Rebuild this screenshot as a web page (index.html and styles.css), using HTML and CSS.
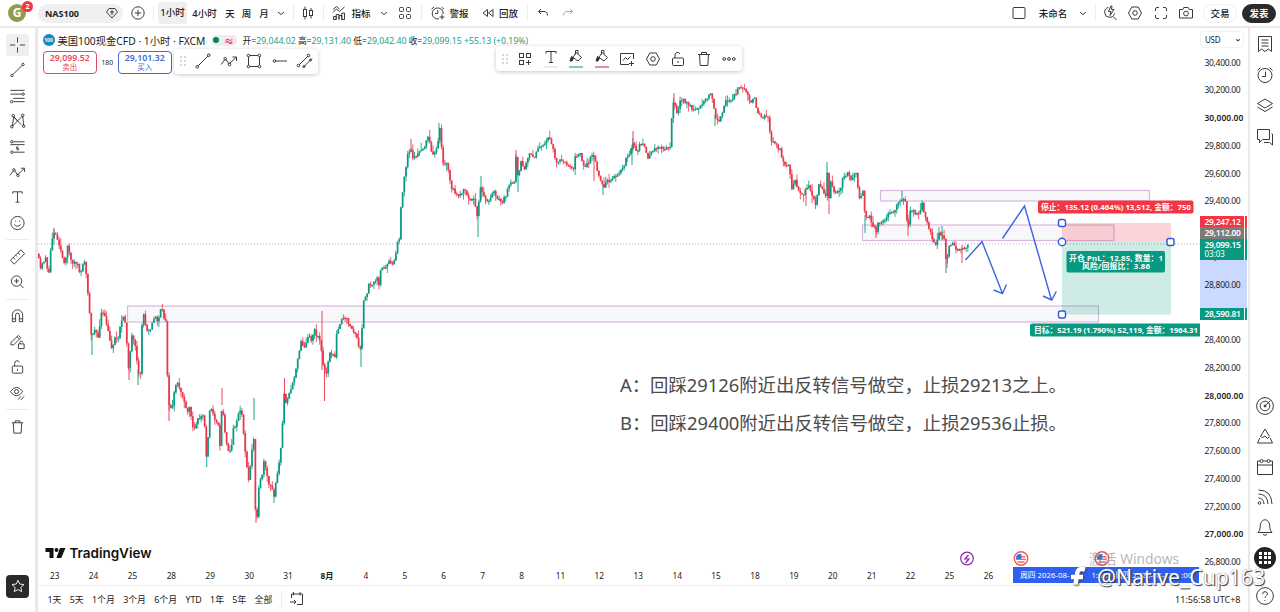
FILE: index.html
```html
<!DOCTYPE html>
<html lang="zh-CN">
<head>
    <meta charset="UTF-8">
    <meta name="viewport" content="width=device-width, initial-scale=1.0">
    <title>NAS100</title>
    <link rel="stylesheet" href="styles.css">
</head>
<body>
    <svg class="defs">
        <symbol id="chevron" viewBox="0 0 18 18"><path d="M6 8l3 2.6L12 8"/></symbol>
        <symbol id="plus-circle" viewBox="0 0 18 18"><circle cx="9" cy="9" r="6.2"/><path d="M9 5.8v6.4M5.8 9h6.4"/></symbol>
        <symbol id="candles" viewBox="0 0 18 18"><path d="M6 2.5v3M6 12.5v3M12 4v2.5M12 11.5v3"/><rect x="4.5" y="5.5" width="3" height="7"/><rect x="10.5" y="6.5" width="3" height="5"/></symbol>
        <symbol id="indicators" viewBox="0 0 18 18"><path d="M3.500 15.500v-3h2.700v3zM6.200 15.500v-5H9v5M9 15.500v-4h2.800v4M11.800 15.500v-6.500h2.700v6.500zM3 8.500l3.500-3.500 3 2.500L14.500 3M3 5.500L6.500 2.500 9.500 5"/></symbol>
        <symbol id="grid" viewBox="0 0 18 18"><rect x="3.500" y="3.500" width="4" height="4" rx="1"/><rect x="10.500" y="3.500" width="4" height="4" rx="1"/><rect x="3.500" y="10.500" width="4" height="4" rx="1"/><rect x="10.500" y="10.500" width="4" height="4" rx="1"/></symbol>
        <symbol id="grid-plus" viewBox="0 0 18 18"><rect x="3.500" y="3.500" width="4" height="4"/><rect x="10.500" y="3.500" width="4" height="4"/><rect x="3.500" y="10.500" width="4" height="4"/><path d="M12.500 10v5M10 12.500h5"/></symbol>
        <symbol id="alarm-plus" viewBox="0 0 18 18"><path d="M10 14.800A5.500 5.500 0 1 1 14.200 10M8.800 6v3.500H6M2.500 5.200L5 3M15 5.200L12.500 3M13 10.500v5M10.500 13h5"/></symbol>
        <symbol id="rewind" viewBox="0 0 18 18"><path d="M8.500 5.500v7L4 9zM14 5.500v7L9.500 9z"/></symbol>
        <symbol id="undo" viewBox="0 0 18 18"><path d="M7 5L4.500 7.500 7 10M4.500 7.500H10c2.500 0 3.500 1.500 3.500 4"/></symbol>
        <symbol id="redo" viewBox="0 0 18 18"><path d="M11 5l2.500 2.500L11 10M13.500 7.500H8c-2.500 0-3.500 1.500-3.500 4"/></symbol>
        <symbol id="square" viewBox="0 0 18 18"><rect x="3" y="3.500" width="12" height="11" rx="1"/></symbol>
        <symbol id="quick-search" viewBox="0 0 18 18"><path d="M7.500 3.400a5 5 0 1 0 6 6M12 12.500l3.500 3.500M10 2L7.500 7.500h2.500L9 11.500l4-6h-2.500L11 2z"/></symbol>
        <symbol id="hexagon" viewBox="0 0 18 18"><path d="M5.800 3h6.400L15.500 9l-3.300 6H5.800L2.500 9z"/><circle cx="9" cy="9" r="2.300"/></symbol>
        <symbol id="fullscreen" viewBox="0 0 18 18"><path d="M3.500 7V5q0-1.500 1.500-1.500h2M11 3.500h2q1.500 0 1.500 1.500v2M14.500 11v2q0 1.500-1.500 1.500h-2M7 14.500H5q-1.500 0-1.500-1.500v-2"/></symbol>
        <symbol id="camera" viewBox="0 0 18 18"><path d="M2.500 5.500h3.300l1-2h4.400l1 2h3.300v8.500h-13z"/><circle cx="9" cy="9.500" r="2.400"/></symbol>
        <symbol id="cross" viewBox="0 0 18 18"><path d="M9 1v5.500M9 11.500V17M1 9h5.500M11.500 9H17"/></symbol>
        <symbol id="line" viewBox="0 0 18 18"><path d="M4.200 13.800l9.600-9.600"/><circle cx="3.200" cy="14.800" r="1.300"/><circle cx="14.800" cy="3.200" r="1.300"/></symbol>
        <symbol id="fib" viewBox="0 0 18 18"><path d="M1.500 3h15M1.500 7h12M4.500 11.500h12M4.500 15h12"/><circle cx="15" cy="7" r="1.300"/><circle cx="2.800" cy="15" r="1.300"/></symbol>
        <symbol id="pattern" viewBox="0 0 18 18"><path d="M3.500 14.500L5 4.500l8 8.500M14.500 3.500L15.500 14M3.500 14.500L14 4M5 4.500l4 4.500"/><circle cx="3" cy="15" r="1.400"/><circle cx="4.500" cy="3.500" r="1.400"/><circle cx="14.500" cy="3" r="1.400"/><circle cx="15.500" cy="14.500" r="1.400"/></symbol>
        <symbol id="position" viewBox="0 0 18 18"><path d="M4.500 3.500h12M1.500 6.500h15M4.500 14.500h12M10 9H8v1.500h2V12H8"/><circle cx="3" cy="3.500" r="1.300"/><circle cx="3" cy="14.500" r="1.300"/></symbol>
        <symbol id="path" viewBox="0 0 18 18"><path d="M1 12.500l3.500-4.500M6 7.500l3 4.500 7-6.500M12.500 5h4v4"/><circle cx="5.200" cy="6.800" r="1.300"/><circle cx="9.500" cy="12.500" r="1.300"/></symbol>
        <symbol id="text" viewBox="0 0 18 18"><path d="M4 5.500V3.500h10v2M9 3.500v11M7 14.500h4"/></symbol>
        <symbol id="smile" viewBox="0 0 18 18"><circle cx="9" cy="9" r="7"/><path d="M5.500 10.500q3.500 4 7 0M6.800 6.500v1M11.200 6.500v1"/></symbol>
        <symbol id="ruler" viewBox="0 0 18 18"><path d="M1.500 12.500l11-11 4 4-11 11zM4.500 9.500l2 2M7 7l1.500 1.500M9.500 4.500l2 2"/></symbol>
        <symbol id="zoom-in" viewBox="0 0 18 18"><circle cx="8" cy="8" r="5.500"/><path d="M12 12l3.500 3.500M8 5.500v5M5.500 8h5"/></symbol>
        <symbol id="magnet" viewBox="0 0 18 18"><path d="M3.500 15V8a5.500 5.500 0 0 1 11 0v7h-3.500V8a2 2 0 0 0-4 0v7zM3.500 12H7M11 12h3.500"/></symbol>
        <symbol id="pen-lock" viewBox="0 0 18 18"><path d="M2 12V9.500L10 2l2.500 2.500L5 12zM8.500 3.500L11 6M10 11h6v5h-6zM11.500 11V9.500a1.500 1.500 0 0 1 3 0"/></symbol>
        <symbol id="unlock" viewBox="0 0 18 18"><rect x="3.500" y="8" width="11" height="7.500" rx="1"/><path d="M6 8V5a2.600 2.600 0 0 1 5-1M9 11v2"/></symbol>
        <symbol id="eye" viewBox="0 0 18 18"><path d="M1.500 7.500q6.500-9 13 0-6.500 9-13 0z"/><circle cx="8" cy="7.500" r="2.200"/><path d="M9.500 16l3-3.500M12.500 16.500l3.500-4"/></symbol>
        <symbol id="trash" viewBox="0 0 18 18"><path d="M3 4.500h12M6.500 4.500v-2h5v2M4.500 4.500l.7 11h7.600l.7-11"/></symbol>
        <symbol id="star" viewBox="0 0 18 18"><path d="M9 2.500l2 4.300 4.700.6-3.500 3.200.9 4.700L9 13l-4.100 2.300.9-4.700-3.500-3.200 4.700-.6z"/></symbol>
        <symbol id="box" viewBox="0 0 18 18"><rect x="3.500" y="3.500" width="11" height="11"/><g fill="#fff"><circle cx="3.500" cy="3.500" r="1.300"/><circle cx="14.500" cy="3.500" r="1.300"/><circle cx="3.500" cy="14.500" r="1.300"/><circle cx="14.500" cy="14.500" r="1.300"/></g></symbol>
        <symbol id="ray" viewBox="0 0 18 18"><circle cx="3.500" cy="9" r="1.300"/><path d="M4.800 9H16"/></symbol>
        <symbol id="channel" viewBox="0 0 18 18"><path d="M3 13l9-9M7 15.500l9-9"/><circle cx="2.500" cy="13.500" r="1.300"/><circle cx="12.500" cy="3.500" r="1.300"/><circle cx="8" cy="14.500" r="1"/><circle cx="14.500" cy="8" r="1"/></symbol>
        <symbol id="dots" viewBox="0 0 18 18"><g fill="#c4c4c4" stroke="none"><circle cx="7" cy="5" r=".9"/><circle cx="11" cy="5" r=".9"/><circle cx="7" cy="9" r=".9"/><circle cx="11" cy="9" r=".9"/><circle cx="7" cy="13" r=".9"/><circle cx="11" cy="13" r=".9"/></g></symbol>
        <symbol id="bucket" viewBox="0 0 18 18"><path d="M9 4.500l5.500 5-3.500 3.500-5-3.500zM8.500 6.500V2.500h2.500V6"/><path d="M4.500 8.500l2 1.500-1.500 3H3z" fill="#222"/></symbol>
        <symbol id="chart-plus" viewBox="0 0 18 18"><path d="M15.500 9V3.500h-13v11H11M5 10.500l2.500-3 2 2 3-3M13.500 11v5M11 13.500h5"/></symbol>
        <symbol id="more" viewBox="0 0 18 18"><circle cx="4.200" cy="9" r="1.400"/><circle cx="9" cy="9" r="1.400"/><circle cx="13.800" cy="9" r="1.400"/></symbol>
        <symbol id="watchlist" viewBox="0 0 18 18"><path d="M2.500 1.500h13v15l-3-2.500-3.500 2.500L5.500 14l-3 2.500zM5.500 5h7M5.500 8h7M5.500 11h7"/></symbol>
        <symbol id="alarm" viewBox="0 0 18 18"><circle cx="9" cy="9.500" r="7"/><path d="M9.500 5.500v5H6M1.500 4.500L4.500 1.500M16.500 4.500l-3-3"/></symbol>
        <symbol id="layers" viewBox="0 0 18 18"><path d="M9 3l7.500 4.500L9 12 1.500 7.500zM1.500 11L9 15.500l7.500-4.500"/></symbol>
        <symbol id="chat" viewBox="0 0 18 18"><path d="M1.500 1.500h12v10h-7l-3 3v-3h-2zM15.500 6h1v11l-3-2.500H8"/></symbol>
        <symbol id="radar" viewBox="0 0 18 18"><circle cx="9" cy="9" r="8.400"/><circle cx="9" cy="9" r="4.800"/><circle cx="9" cy="9" r="1" fill="#333"/><path d="M9 9l5.500-5.500"/></symbol>
        <symbol id="ideas" viewBox="0 0 18 18"><path d="M4.500 9.500L9 2l4.500 7.500-2 2L9 9l-2.500 1.500zM3.800 11L1.500 16h15l-2.300-5"/></symbol>
        <symbol id="calendar" viewBox="0 0 18 18"><path d="M4 3H1.500v13.500h15V3H14M7 3h4M1.500 7h15"/><circle cx="5.500" cy="3" r="1.500"/><circle cx="12.500" cy="3" r="1.500"/></symbol>
        <symbol id="feed" viewBox="0 0 18 18"><circle cx="3.500" cy="15" r="1.300"/><path d="M2.500 10q5 0 5.500 6M2.500 6q9 0 9.500 10M2.500 2q13 0 13.500 14"/></symbol>
        <symbol id="bell" viewBox="0 0 18 18"><path d="M2 14.500h14q-2.200-2-2.200-5.500C13.800 4 11.500 1.800 9 1.800S4.200 4 4.200 9Q4.200 12.500 2 14.500zM7 16.500q2 1.500 4 0"/></symbol>
        <symbol id="help" viewBox="0 0 18 18"><circle cx="9" cy="9" r="8.400"/><path d="M6.500 7.200q0-2.500 2.500-2.500t2.500 2.200c0 1.800-2.500 1.800-2.500 4M9 13v1"/></symbol>
        <symbol id="goto" viewBox="0 0 18 18"><path d="M4.500 8V4h11v10.500H10M6.500 2v3.500M13 2v3.500M3 12h6M7 10l2 2-2 2"/></symbol>
        <symbol id="flag" viewBox="0 0 18 18"><circle cx="9" cy="9" r="7.600" fill="#fff" stroke="#f2515d" stroke-width="1.500"/><path d="M4 7h10M3.500 10h11M5 13h8" stroke="#f06a70" stroke-width="1.600"/><path d="M3.500 9.500V6.500L6 4h3.500v5.500z" fill="#3d73d8" stroke="none"/></symbol>
    </svg>

    <header class="topbar">
        <div class="top-left">
            <div class="avatar">G<span class="badge">2</span></div>
            <div class="search"><b>NAS100</b><svg class="icon"><path d="M6 4.500h6l2.500 3.500L9 14 3.500 8zM9 6v5M7 8h4"/></svg></div>
            <svg class="icon"><use href="#plus-circle"/></svg>
            <i class="sep"></i>
            <span class="tab active">1小时</span>
            <span>4小时</span>
            <span>天</span>
            <span>周</span>
            <span>月</span>
            <svg class="icon"><use href="#chevron"/></svg>
            <i class="sep"></i>
            <svg class="icon"><use href="#candles"/></svg>
            <i class="sep"></i>
            <svg class="icon"><use href="#indicators"/></svg>
            <span>指标</span>
            <svg class="icon"><use href="#chevron"/></svg>
            <svg class="icon"><use href="#grid"/></svg>
            <i class="sep"></i>
            <svg class="icon"><use href="#alarm-plus"/></svg>
            <span>警报</span>
            <svg class="icon push"><use href="#rewind"/></svg>
            <span>回放</span>
            <i class="sep"></i>
            <svg class="icon"><use href="#undo"/></svg>
            <svg class="icon faded"><use href="#redo"/></svg>
        </div>
        <div class="top-right">
            <svg class="icon"><use href="#square"/></svg>
            <span>未命名</span>
            <svg class="icon"><use href="#chevron"/></svg>
            <i class="sep"></i>
            <svg class="icon"><use href="#quick-search"/></svg>
            <svg class="icon"><use href="#hexagon"/></svg>
            <svg class="icon"><use href="#fullscreen"/></svg>
            <svg class="icon"><use href="#camera"/></svg>
            <span class="trade">交易</span>
            <span class="publish">发表</span>
        </div>
    </header>

    <nav class="tools">
        <div class="tool selected"><svg class="icon"><use href="#cross"/></svg></div>
        <div class="tool"><svg class="icon"><use href="#line"/></svg></div>
        <div class="tool"><svg class="icon"><use href="#fib"/></svg></div>
        <div class="tool"><svg class="icon"><use href="#pattern"/></svg></div>
        <div class="tool"><svg class="icon"><use href="#position"/></svg></div>
        <div class="tool"><svg class="icon"><use href="#path"/></svg></div>
        <div class="tool"><svg class="icon"><use href="#text"/></svg></div>
        <div class="tool"><svg class="icon"><use href="#smile"/></svg></div>
        <hr>
        <div class="tool"><svg class="icon"><use href="#ruler"/></svg></div>
        <div class="tool"><svg class="icon"><use href="#zoom-in"/></svg></div>
        <hr>
        <div class="tool"><svg class="icon"><use href="#magnet"/></svg></div>
        <div class="tool"><svg class="icon"><use href="#pen-lock"/></svg></div>
        <div class="tool"><svg class="icon"><use href="#unlock"/></svg></div>
        <div class="tool"><svg class="icon"><use href="#eye"/></svg></div>
        <hr>
        <div class="tool"><svg class="icon"><use href="#trash"/></svg></div>
        <div class="favorite"><svg class="icon"><use href="#star"/></svg></div>
    </nav>

    <main class="chart">
        <div class="plot">
            <!-- user units are window pixels -->
            <svg class="canvas" viewBox="38 28 1162 539">
                <g class="zone">
                    <rect x="127.500" y="306" width="971" height="16"/>
                    <rect x="862.500" y="225" width="251.500" height="15.500"/>
                    <rect x="880.500" y="190.500" width="269" height="10.500"/>
                </g>
                <path class="last-price" d="M38 244H1200"/>
                <g id="bars"></g>
                <rect x="1062" y="223" width="109" height="19" fill="#f23645" opacity=".21"/>
                <rect x="1062" y="242" width="109" height="72.500" fill="#089981" opacity=".2"/>
                <g class="arrow">
                    <path d="M965.500 260L982 241.500l20.500 52M993.500 290l9 3.700 4-9.200"/>
                    <path d="M1002.500 238.500L1024.500 206l27 94M1043 296l8.700 4 4.600-8.500"/>
                </g>
                <rect x="1038" y="200.500" width="155.500" height="13" rx="2" fill="#f23645"/>
                <text class="tag" x="1041" y="210" textLength="150">停止：135.12 (0.464%) 13,512, 金额：750</text>
                <rect x="1066.500" y="251" width="98.500" height="21.500" rx="2" fill="#089981"/>
                <text class="tag" x="1069" y="260.500" textLength="94">开仓 PnL：12.85, 数量：1</text>
                <text class="tag" x="1082" y="268.500" textLength="68">风险/回报比：3.86</text>
                <rect x="1030" y="323.500" width="172" height="13" rx="2" fill="#089981"/>
                <text class="tag" x="1034" y="333" textLength="164">目标：521.19 (1.790%) 52,119, 金额：1964.31</text>
                <g class="handle">
                    <rect x="1058.500" y="219.500" width="7" height="7" rx="2"/>
                    <circle cx="1062" cy="242" r="3.700"/>
                    <rect x="1167" y="238.500" width="7" height="7" rx="2"/>
                    <rect x="1058.500" y="311" width="7" height="7" rx="2"/>
                </g>
                <text class="note" x="620" y="392" textLength="447">A：回踩29126附近出反转信号做空，止损29213之上。</text>
                <text class="note" x="620" y="429.500" textLength="447">B：回踩29400附近出反转信号做空，止损29536止损。</text>
                <g fill="#111">
                    <path d="M45.500 548h8v10h-4v-6h-4zM60 548h5.500l-4.300 10h-4.800z"/>
                    <circle cx="56.500" cy="550" r="2"/>
                    <text class="brand" x="69.500" y="557.500" textLength="82">TradingView</text>
                </g>
                <g fill="none" stroke="#8e24aa" stroke-width="1.200">
                    <circle cx="967" cy="558.500" r="6.300"/>
                    <path d="M968.500 555l-3.500 4h4l-3.500 4"/>
                </g>
                <use href="#flag" x="1013" y="550.500" width="16" height="16"/>
                <use href="#flag" x="1094" y="550.500" width="16" height="16"/>
            </svg>

            <div class="legend">
                <span class="logo">100</span>
                <span class="title">美国100现金CFD · 1小时 · FXCM</span>
                <span class="status"><i></i><b>≈</b></span>
                <span class="ohlc">开=<em>29,044.02</em> 高=<em>29,131.40</em> 低=<em>29,042.40</em> 收=<em>29,099.15</em> <em>+55.13 (+0.19%)</em></span>
            </div>
            <div class="quotes">
                <div class="quote sell"><b>29,099.52</b>卖出</div>
                <span class="spread">180</span>
                <div class="quote buy"><b>29,101.32</b>买入</div>
            </div>

            <div class="float lines">
                <svg class="icon"><use href="#dots"/></svg>
                <svg class="icon"><use href="#line"/></svg>
                <svg class="icon"><use href="#path"/></svg>
                <svg class="icon"><use href="#box"/></svg>
                <svg class="icon"><use href="#ray"/></svg>
                <svg class="icon"><use href="#channel"/></svg>
            </div>
            <div class="float props">
                <svg class="icon"><use href="#dots"/></svg>
                <svg class="icon"><use href="#grid-plus"/></svg>
                <span class="swatch"><svg class="icon"><use href="#text"/></svg></span>
                <span class="swatch green"><svg class="icon"><use href="#bucket"/></svg></span>
                <span class="swatch red"><svg class="icon"><use href="#bucket"/></svg></span>
                <svg class="icon"><use href="#chart-plus"/></svg>
                <svg class="icon"><use href="#hexagon"/></svg>
                <svg class="icon"><use href="#unlock"/></svg>
                <svg class="icon"><use href="#trash"/></svg>
                <svg class="icon"><use href="#more"/></svg>
            </div>
        </div>

        <aside class="prices">
            <div class="currency">USD<svg class="icon"><use href="#chevron"/></svg></div>
            <div class="range"></div>
            <div class="scale" id="scale"></div>
            <div class="marks">
                <div class="mark stop">29,247.12</div>
                <div class="mark entry">29,112.00</div>
                <div class="mark last">29,099.15<small>03:03</small></div>
            </div>
            <div class="mark target">28,590.81</div>
        </aside>

        <div class="dates">
            <div class="days" id="days"></div>
            <div class="date-range"><span>周四 2026-08-</span><span>1:00</span><span>周四 2026-08-27</span><span>:00</span></div>
        </div>

        <footer class="ranges">
            <span>1天</span><span>5天</span><span>1个月</span><span>3个月</span><span>6个月</span><span>YTD</span><span>1年</span><span>5年</span><span>全部</span>
            <i class="sep"></i>
            <svg class="icon"><use href="#goto"/></svg>
            <span class="clock">11:56:58 UTC+8</span>
        </footer>
    </main>

    <aside class="widgets">
        <div><svg class="icon"><use href="#watchlist"/></svg></div>
        <div><svg class="icon"><use href="#alarm"/></svg></div>
        <div><svg class="icon"><use href="#layers"/></svg></div>
        <div class="chat"><svg class="icon"><use href="#chat"/></svg></div>
        <div class="first-low"><svg class="icon"><use href="#radar"/></svg></div>
        <div><svg class="icon"><use href="#ideas"/></svg></div>
        <div><svg class="icon"><use href="#calendar"/></svg></div>
        <div><svg class="icon"><use href="#feed"/></svg></div>
        <div><svg class="icon"><use href="#bell"/></svg></div>
        <div><span class="apps"><i></i><i></i><i></i><i></i><i></i><i></i><i></i><i></i><i></i></span></div>
        <div class="help"><svg class="icon"><use href="#help"/></svg></div>
    </aside>

    <div class="activate">激活 Windows</div>
    <div class="signature">
        <svg viewBox="0 0 22 22"><path d="M18 3.500c-5-1.500-7.500 0-8 5L8.500 18.500M4 11h12"/></svg>
        <span>@Native_Cup163</span>
    </div>

    <script src="chart.js"></script>
</body>
</html>
```

FILE: styles.css
```css
* {
    box-sizing: border-box;
}

body {
    margin: 0;
    width: 1280px;
    height: 612px;
    overflow: hidden;
    position: relative;
    display: grid;
    grid-template-columns: 35px 1210px 30px;
    grid-template-rows: 26px 584px;
    gap: 2px 2.5px;
    background: #e9e9eb;
    color: #222;
    font-family: "Noto Sans", "Noto Sans CJK SC", sans-serif;
    font-size: 9.5px;
}

.defs {
    position: absolute;
    width: 0;
    height: 0;
}

.icon {
    width: 18px;
    height: 18px;
    flex: none;
    fill: none;
    stroke: #3a3a3a;
    stroke-width: 1;
}

.faded {
    opacity: 0.45;
}

.sep {
    width: 1px;
    height: 16px;
    background: #ececec;
}

/* top bar */
.topbar {
    grid-column: 1 / 4;
    display: flex;
    justify-content: space-between;
    background: #fff;
}

.top-left,
.top-right {
    display: grid;
    align-items: center;
    justify-items: center;
    white-space: nowrap;
    font-weight: 500;
}

.top-left {
    grid-template-columns: 34px 93px 22px 9px 29px 35px 16px 17px 18px 16px 8px 22px 8px 24px 20px 26px 16px 16px 18px 24px 27px 21px 16px 16px 34px;
}

.top-right {
    grid-template-columns: 20px 48px 12px 12px 18px 32px 19px 32px 36px 42px;
}

.push {
    margin-left: 7px;
}

.avatar {
    position: relative;
    width: 18px;
    height: 18px;
    border-radius: 50%;
    background: #8f9b4f;
    color: #fff;
    font: bold 12px/18px "Noto Sans", sans-serif;
    text-align: center;
}

.badge {
    position: absolute;
    left: 14px;
    top: -3.5px;
    width: 11px;
    height: 11px;
    border-radius: 50%;
    background: #f23645;
    font-size: 7px;
    line-height: 11px;
}

.search {
    display: flex;
    align-items: center;
    justify-content: space-between;
    width: 85px;
    height: 19px;
    padding: 0 2px 0 7px;
    border-radius: 10px;
    background: #f0f0f0;
    font-size: 9px;
}

.tab {
    width: 29px;
    height: 22px;
    line-height: 22px;
    text-align: center;
    border-radius: 3px;
    background: #efefef;
}

.trade,
.publish {
    width: 34px;
    height: 19px;
    line-height: 17px;
    border: 1px solid #f0f0f0;
    border-radius: 10px;
    text-align: center;
}

.publish {
    background: #2a2a2a;
    border-color: #2a2a2a;
    color: #fff;
    font-weight: bold;
}

/* drawing tools */
.tools {
    display: flex;
    flex-direction: column;
    align-items: center;
    padding-top: 4.3px;
    background: #fff;
}

.tool {
    display: flex;
    align-items: center;
    justify-content: center;
    width: 23px;
    height: 25.4px;
}

.tool .icon {
    width: 17px;
}

.selected {
    height: 22px;
    margin: 1.7px 0;
    border-radius: 3px;
    background: #efefef;
}

.tools hr {
    width: 24px;
    height: 1px;
    margin: 3.8px 0 4px;
    border: 0;
    background: #ececec;
}

.favorite {
    display: flex;
    align-items: center;
    justify-content: center;
    width: 23px;
    height: 23px;
    margin-top: auto;
    margin-bottom: 14.5px;
    border-radius: 4px;
    background: #2a2a2a;
}

.favorite .icon {
    width: 16px;
    stroke: #fff;
}

/* chart */
.chart {
    display: grid;
    grid-template-columns: 1162.5px 1fr;
    grid-template-rows: 539px 19px 26px;
    background: #fff;
}

.plot {
    position: relative;
}

.canvas {
    display: block;
    width: 1162px;
    height: 539px;
}

.zone rect {
    fill: #785a82;
    fill-opacity: 0.05;
    stroke: #d9b8de;
    stroke-width: 1.2;
}

.last-price {
    stroke: #9fbdb8;
    stroke-dasharray: 1 2;
}

.arrow {
    fill: none;
    stroke: #3d63e6;
    stroke-width: 1.4;
}

.tag {
    fill: #fff;
    font-size: 7.8px;
    font-weight: bold;
}

.note {
    fill: #4b4b4b;
    font-size: 18.4px;
}

.brand {
    font: 600 13.5px Inter, sans-serif;
}

.handle {
    fill: #fff;
    stroke: #2f57d9;
    stroke-width: 1.4;
}

.legend {
    position: absolute;
    left: 5px;
    top: 5px;
    display: flex;
    align-items: center;
    height: 14px;
    white-space: nowrap;
}

.logo {
    width: 12px;
    height: 12px;
    border-radius: 50%;
    background: #1687bd;
    color: #fff;
    font: bold 5px/12px "Noto Sans", sans-serif;
    text-align: center;
}

.title {
    width: 156px;
    padding-left: 3px;
    font-size: 10.3px;
}

.status {
    display: flex;
    align-items: center;
    justify-content: space-around;
    flex: none;
    width: 26px;
    height: 11px;
    margin-right: 6px;
    border-radius: 5px;
    background: linear-gradient(90deg, #e3f3f0 50%, #fbe3ec 50%);
    color: #d6336c;
    font-size: 10px;
}

.status i {
    width: 6px;
    height: 6px;
    border-radius: 50%;
    background: #087f5b;
}

.ohlc {
    font-size: 8.7px;
}

.ohlc em {
    color: #22a08b;
    font-style: normal;
}

.quotes {
    position: absolute;
    left: 5px;
    top: 22.5px;
    display: flex;
    align-items: center;
}

.quote {
    width: 54.5px;
    height: 23px;
    border: 1px solid;
    border-radius: 4px;
    font-size: 7.5px;
    line-height: 9px;
    text-align: center;
    background: #fff;
}

.quote b {
    display: block;
    padding-top: 2px;
    font-size: 8.8px;
    font-weight: 600;
}

.sell {
    color: #e8495a;
}

.buy {
    color: #4467dc;
}

.spread {
    width: 20.5px;
    font-size: 6.8px;
    text-align: center;
}

.float {
    position: absolute;
    display: flex;
    align-items: center;
    height: 25px;
    border-radius: 4px;
    background: #fff;
    box-shadow: 0 1px 4px rgba(0, 0, 0, 0.22);
}

.lines {
    left: 136px;
    top: 20.5px;
    width: 144px;
    gap: 7.6px;
}

.props {
    left: 458.5px;
    top: 18px;
    width: 245.5px;
    gap: 7.45px;
}

.float .icon:first-child {
    margin-right: -5px;
}

.swatch {
    display: flex;
    align-items: center;
    justify-content: center;
    width: 18px;
    height: 19px;
    background: linear-gradient(#ececec, #ececec) center bottom / 14px 2px no-repeat;
}

.float .swatch .icon {
    margin: -3px 0 0;
}

.swatch.green {
    background-image: linear-gradient(#7fcabb, #7fcabb);
}

.swatch.red {
    background-image: linear-gradient(#e58f9b, #e58f9b);
}

/* price scale */
.prices {
    position: relative;
    font-size: 8.5px;
    letter-spacing: -0.3px;
}

.currency {
    display: flex;
    align-items: center;
    justify-content: space-between;
    width: 44px;
    height: 17px;
    margin-top: 3px;
    padding-left: 4px;
    border: 1px solid #f2f2f2;
    border-radius: 3px;
    font-size: 8px;
}

.currency .icon {
    width: 10px;
    height: 10px;
    stroke-width: 2;
}

.range {
    position: absolute;
    left: 0;
    top: 214px;
    width: 47px;
    height: 73px;
    background: #cbd8ff;
}

.scale {
    position: relative;
    padding-top: 0.5px;
}

.scale div {
    height: 27.75px;
    padding-left: 4.5px;
    line-height: 27.75px;
    white-space: nowrap;
}

.scale .major {
    font-weight: 600;
    letter-spacing: 0;
}

.marks {
    position: absolute;
    left: 0;
    top: 187.5px;
}

.mark {
    width: 47px;
    height: 11.5px;
    padding-left: 4.5px;
    border-right: 2px solid;
    color: #fff;
    font-weight: 600;
    line-height: 11.5px;
    background-clip: padding-box;
    box-shadow: inset -1px 0 #fff;
}

.mark small {
    display: block;
    font-size: 8px;
    font-weight: normal;
    letter-spacing: 0;
    line-height: 8px;
}

.stop {
    background-color: #f23645;
    border-color: #f23645;
}

.entry {
    background-color: #7b7b7b;
    border-color: #7b7b7b;
}

.last {
    height: 21.5px;
    background-color: #089981;
    border-color: #089981;
}

.target {
    position: absolute;
    left: 0;
    top: 280px;
    background-color: #089981;
    border-color: #089981;
}

/* time scale */
.dates {
    position: relative;
    grid-column: 1 / 3;
    border-bottom: 1px solid #efefef;
}

.days {
    display: flex;
    margin-left: -2.3px;
    font-size: 8.3px;
    line-height: 18px;
}

.days span {
    width: 38.92px;
    flex: none;
    text-align: center;
}

.date-range {
    position: absolute;
    left: 975.5px;
    top: 0;
    display: flex;
    gap: 22px;
    width: 186px;
    height: 16px;
    padding-left: 7px;
    overflow: hidden;
    background: #2f5ff0;
    color: #fff;
    font-size: 7.8px;
    line-height: 17px;
    white-space: nowrap;
}

.date-range span:nth-child(n+3) {
    margin-left: -14px;
}

.ranges {
    grid-column: 1 / 3;
    display: flex;
    align-items: center;
    gap: 8.3px;
    padding: 0 7px 0 10px;
    font-size: 8.9px;
}

.ranges .icon {
    margin-left: -3px;
}

.clock {
    margin-left: auto;
    font-size: 9px;
}

/* right widget bar */
.widgets {
    display: flex;
    flex-direction: column;
    padding-top: 1px;
    background: #fff;
}

.widgets div {
    display: flex;
    align-items: center;
    justify-content: center;
    height: 30.4px;
}

.widgets .chat {
    margin: 1.5px 0 -1.5px;
}

.widgets .first-low {
    margin-top: 240px;
}

.widgets .help {
    margin-top: 8px;
}

.apps {
    display: grid;
    grid-template-columns: repeat(3, 3px);
    gap: 1.5px;
    place-content: center;
    width: 22px;
    height: 22px;
    border-radius: 50%;
    background: #222;
}

.apps i {
    height: 3px;
    background: #fff;
}

/* overlays */
.activate {
    position: absolute;
    left: 1089px;
    top: 549px;
    color: rgba(120, 120, 120, 0.55);
    font-size: 13.8px;
    line-height: 20px;
}

.signature {
    position: absolute;
    left: 1067px;
    top: 563px;
    display: flex;
    align-items: center;
    gap: 8px;
    color: #fff;
    font-size: 21.2px;
    line-height: 27px;
    text-shadow: 1px 1px 1px #333, 0 0 1px #666;
}

.signature svg {
    width: 22px;
    height: 22px;
    fill: none;
    stroke: #fff;
    stroke-width: 4.5;
    filter: drop-shadow(1px 1px 1px #444);
}
```

FILE: chart.js
```js
const UP = '#089981';
const DOWN = '#e8374a';
const STEP = 38.92 / 23; // one bar per trading hour

// price path as x,y turning points
const path = `38,254 40,270 44,260 46,256 48,274 49.5,275 51,242 54,232 57,237 59,243 62,256 65,268 66,258 68,240 70,260 73,262 78,265
80,278 82,263 85,263 87,282 89,308 91,332 92,335 95,327 98,340 101,313 104,315 107,326 110,342 112,348 115,338 118,339 120,326 123,318
126,324 128,370 132,336 136,351 138,375 140.5,373 142,325 144,313 146,328 150,329 153,322 155,316 158,322 160,311 162,310 164,318 166,320
167,365 169,407 172,408 175,388 178,384 181,392 184,400 187,415 189,408 190,407 193,430 197,420 201,417 204,415 206.5,460 210,405 213,415
218,424 220,446 222,400 225,434 229,452 231,450 234,425 236,425 239,410 242,415 245,448 248,480 249,480 252,450 253,402 255,505 257,516
259,487 262,475 264,462 267,476 269,485 272,489 274,495 276,480 279,463 282,440 283.5,390 286,402 289,393 292,387 295,375 297,360 299,353
301,340 305,350 307,338 309,332 311,342 314,330 317,336 319,335 321,348 323,365 326,374 329,355 331,353 335,358 337,330 340,323 344,318
348,321 352,330 356,334 359,350 361,351 363,305 364,299 366,298 369,284 373,283 377,277 379,287 381,268 385,270 388,260 391,262 394,262
396,252 397,241 399,243 401,208 404,180 407,158 409,150 412,152 413,158 417,155 421,151 425,145 427,137 430,143 432,155 435,150 438,144
440,128 442,155 444,170 446,160 449,173 451,189 454,190 458,199 461,192 465,191 468,200 474,201 477,215 479,200 481,182 483,195 485,200
490,200 494,190 498,200 503,202 507,192 510,184 514,185 516,155 518,177 521,160 524,170 527,158 530,155 535,157 538,147 543,147 547,139
549,136 553,147 556,162 560,160 566,165 570,165 573,172 575,155 580,153 584,165 589,164 591,155 595,158 599,177 603,187 607,182 615,176
622,170 627,156 631,150 633,142 637,153 640,143 643,145 648,158 653,150 660,146 666,149 671,148 672,106 675,103 677,114 680,100 684,100
690,107 697,110 704,100 711,93 713,103 716,121 719,120 723,111 726,101 732,100 737,92 740,85 745,87 749,97 751,102 754,94 756,106 759,116
763,118 768,115 771,140 775,143 778,150 780,150 784,165 788,165 791,178 792,192 795,179 798,190 803,194 809,186 812,195 816,204 819,183
822,188 826,197 827,165 829,197 831,180 834,192 840,193 843,178 847,173 851,180 856,173 860,202 863,190 865,218 870,215 872,223 876,232
878,224 882,223 886,219 890,212 894,212 898,204 903,196 906,202 907,225 909,222 911,207 914,213 919,214 922,202 925,215 929,228 933,241
936,245 939,233 944,237 946,262 949,247 952,243 957,250 962,250 967,247`.split(/\s+/).map(p => p.split(',').map(Number));

// long shadows: x, top, bottom
const shadows = [[54, 229, 238], [92, 335, 355], [129, 368, 380], [138, 370, 385], [169, 405, 421], [206.7, 455, 467], [222, 388, 405],
    [254, 398, 420], [256, 510, 523], [274, 490, 503], [284.5, 378, 400], [322, 311, 370], [324.5, 370, 401], [361, 345, 367], [411, 139, 152],
    [439, 123, 140], [478, 205, 237], [481, 176, 200], [516, 150, 170], [518, 170, 192], [594, 155, 181], [603, 185, 195], [633, 131, 150],
    [632, 145, 165], [674, 93, 110], [715, 115, 126], [806, 190, 206], [827, 162, 190], [829, 190, 214], [865, 215, 233], [876, 225, 238],
    [902, 191, 200], [908, 215, 236], [946, 260, 273], [947, 255, 268], [942, 226, 240], [962, 245, 263]];

function priceAt(x) {
    for (let i = 1; i < path.length; i++) {
        if (x <= path[i][0]) {
            const [x0, y0] = path[i - 1];
            const [x1, y1] = path[i];
            return y0 + (y1 - y0) * (x - x0) / (x1 - x0);
        }
    }
    return path[path.length - 1][1];
}

let seed = 11;
function random() {
    seed = (seed * 16807) % 2147483647;
    return seed / 2147483647;
}

let bars = '';
let open = priceAt(38);
for (let x = 38.8; x < 968; x += STEP) {
    const close = priceAt(x) + (random() - 0.5) * 4.5;
    const top = Math.min(open, close);
    const height = Math.max(Math.abs(close - open), 1.2);
    const high = top - random() * random() * 8;
    const low = top + height + random() * random() * 8;
    const color = close < open ? UP : DOWN;
    bars += `<path d="M${x.toFixed(1)} ${high.toFixed(1)}V${low.toFixed(1)}" stroke="${color}" stroke-width=".8"/>`;
    bars += `<rect x="${(x - 0.85).toFixed(2)}" y="${top.toFixed(1)}" width="1.7" height="${height.toFixed(1)}" fill="${color}"/>`;
    open = close;
}
shadows.forEach(([x, y1, y2], i) => {
    // the 8/1 drop and the 21 Aug low are both falling bars
    const color = x === 322 || x === 324.5 || i % 2 === 0 && x !== 478 ? DOWN : UP;
    bars += `<path d="M${x} ${y1}V${y2}" stroke="${color}" stroke-width=".9"/>`;
});
document.getElementById('bars').innerHTML = bars;

// labels under the stop and target marks stay blank
const covered = [29200, 28600];
let scale = '';
for (let price = 30400; price >= 26800; price -= 200) {
    const label = covered.includes(price) ? '' : price.toLocaleString('en-US') + '.00';
    scale += `<div class="${price % 1000 ? '' : 'major'}">${label}</div>`;
}
document.getElementById('scale').innerHTML = scale;

const days = '23 24 25 28 29 30 31 8月 4 5 6 7 8 11 12 13 14 15 18 19 20 21 22 25 26'.split(' ');
document.getElementById('days').innerHTML = days
    .map(day => day === '8月' ? `<span><b>${day}</b></span>` : `<span>${day}</span>`).join('');
```
